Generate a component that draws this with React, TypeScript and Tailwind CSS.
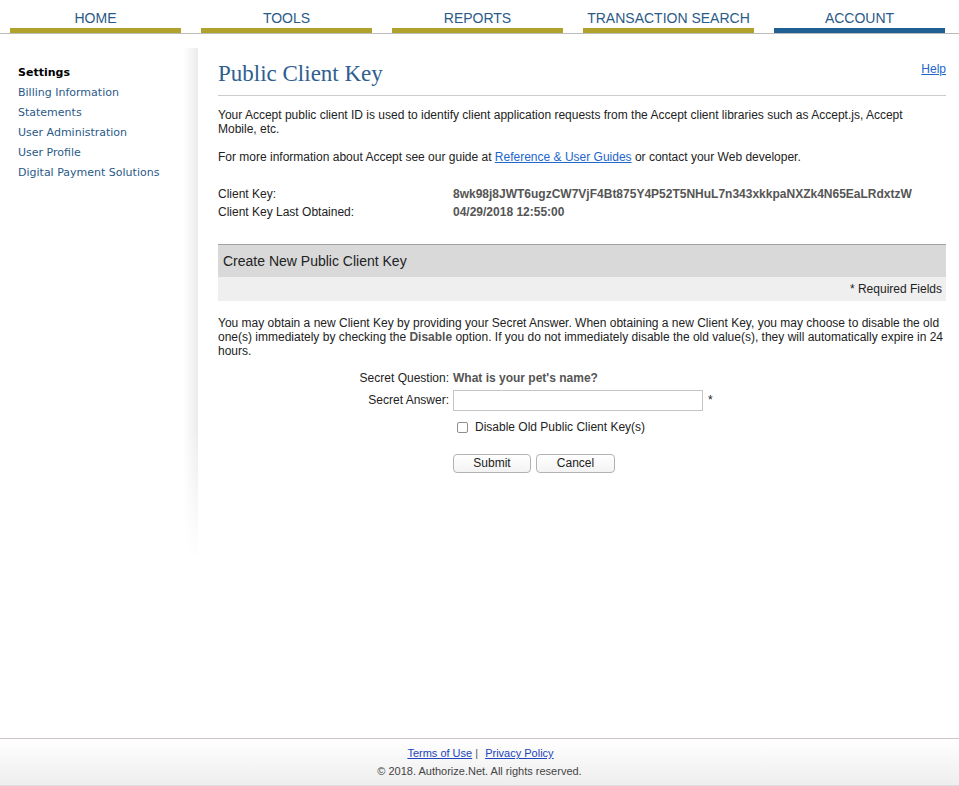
import React from 'react'

const tabs = [
  { label: 'HOME', active: false },
  { label: 'TOOLS', active: false },
  { label: 'REPORTS', active: false },
  { label: 'TRANSACTION SEARCH', active: false },
  { label: 'ACCOUNT', active: true },
]

const sideLinks = ['Billing Information', 'Statements', 'User Administration', 'User Profile', 'Digital Payment Solutions']

export default function App() {
  return (
    <div className="min-h-screen flex flex-col bg-white text-[#222] font-['Liberation_Sans',Arial,sans-serif]">
      {/* Top navigation */}
      <nav className="flex gap-5 pl-[10px] border-b border-[#bbbbbb] h-[34px]">
        {tabs.map((t) => (
          <div key={t.label} className="w-[171px] flex flex-col">
            <div className="pt-[10px] leading-[16px] text-[14px] text-center text-[#2a5a88]">{t.label}</div>
            <div className={`mt-[2px] h-[5px] ${t.active ? 'bg-[#1f5f93]' : 'bg-[#b0a22d]'}`} />
          </div>
        ))}
      </nav>

      <div className="flex-1 flex pt-[14px]">
        {/* Sidebar */}
        <aside className="w-[198px] shrink-0 flex">
          <div className="flex-1 pl-[18px] pt-[15px] font-['DejaVu_Sans',Verdana,sans-serif] text-[11px] leading-[20px]">
            <div className="font-bold text-black">Settings</div>
            {sideLinks.map((l) => (
              <div key={l} className="text-[#2a5a88]">{l}</div>
            ))}
          </div>
          <div className="w-[15px] h-[512px] bg-gradient-to-r from-white to-[#ececec] [mask-image:linear-gradient(to_bottom,black_75%,transparent)]" />
        </aside>

        {/* Main content */}
        <main className="flex-1 pl-[20px] pr-[13px] text-[12px] leading-[14px]">
          <div className="flex items-start justify-between border-b border-[#cccccc] pt-[12px] pb-[7px]">
            <h1 className="font-['Liberation_Serif','Times_New_Roman',serif] text-[23px] leading-[28px] text-[#2f5f8f]">Public Client Key</h1>
            <a href="#" className="mt-[2px] underline text-[#2266cc]">Help</a>
          </div>

          <p className="mt-[12px] pr-[6px]">
            Your Accept public client ID is used to identify client application requests from the Accept client libraries such as Accept.js, Accept Mobile, etc.
          </p>
          <p className="mt-[14px]">
            For more information about Accept see our guide at{' '}
            <a href="#" className="underline text-[#2266cc]">Reference &amp; User Guides</a> or contact your Web developer.
          </p>

          <div className="mt-[21px]">
            <div className="flex h-[18px] items-center">
              <div className="w-[235px]">Client Key:</div>
              <div className="font-bold text-[#555]">8wk98j8JWT6ugzCW7VjF4Bt875Y4P52T5NHuL7n343xkkpaNXZk4N65EaLRdxtzW</div>
            </div>
            <div className="flex h-[18px] items-center">
              <div className="w-[235px]">Client Key Last Obtained:</div>
              <div className="font-bold text-[#555]">04/29/2018 12:55:00</div>
            </div>
          </div>

          <div className="mt-[23px] border-t border-[#a3a3a3] bg-[#d9d9d9] h-[33px] flex items-center pl-[5px] text-[14px]">
            Create New Public Client Key
          </div>
          <div className="bg-[#efefef] h-[24px] flex items-center justify-end pr-[4px]">* Required Fields</div>

          <p className="mt-[15px]">
            You may obtain a new Client Key by providing your Secret Answer. When obtaining a new Client Key, you may choose to disable the old one(s) immediately by checking the <b className="text-[#555]">Disable</b> option. If you do not immediately disable the old value(s), they will automatically expire in 24 hours.
          </p>

          <div className="mt-[11px] flex flex-col">
            <div className="flex h-[18px] items-center">
              <div className="w-[231px] text-right">Secret Question:</div>
              <div className="ml-[4px] font-bold text-[#555]">What is your pet's name?</div>
            </div>
            <div className="flex h-[22px] items-center mt-[2px]">
              <div className="w-[231px] text-right">Secret Answer:</div>
              <input className="ml-[4px] w-[250px] h-[21px] border border-[#c4c4c4] outline-none px-1" />
              <span className="ml-[5px]">*</span>
            </div>
            <label className="flex h-[18px] items-center mt-[7px] ml-[239px]">
              <span className="w-[11px] h-[11px] rounded-[2px] border border-[#8e8e8e] bg-white" />
              <span className="ml-[7px]">Disable Old Public Client Key(s)</span>
            </label>
            <div className="flex gap-[5px] mt-[18px] ml-[235px]">
              <button className="w-[78px] h-[19px] rounded-[4px] border border-[#b3b3b3] bg-gradient-to-b from-white to-[#f3f3f3] text-[12px] leading-[17px]">Submit</button>
              <button className="w-[79px] h-[19px] rounded-[4px] border border-[#b3b3b3] bg-gradient-to-b from-white to-[#f3f3f3] text-[12px] leading-[17px]">Cancel</button>
            </div>
          </div>
        </main>
      </div>

      {/* Footer */}
      <footer className="h-[48px] border-t border-[#cdc4c6] border-b border-b-[#dddddd] bg-gradient-to-b from-white to-[#eeeeee] flex flex-col items-center pt-[5px] text-[11px] leading-[18px]">
        <div className="pl-[2px]">
          <a href="#" className="underline text-[#2244bb]">Terms of Use</a>
          <span className="text-[#555]"> | </span>
          <a href="#" className="underline text-[#2244bb] ml-[4px]">Privacy Policy</a>
        </div>
        <div className="text-[#444]">© 2018. Authorize.Net. All rights reserved.</div>
      </footer>
    </div>
  )
}
